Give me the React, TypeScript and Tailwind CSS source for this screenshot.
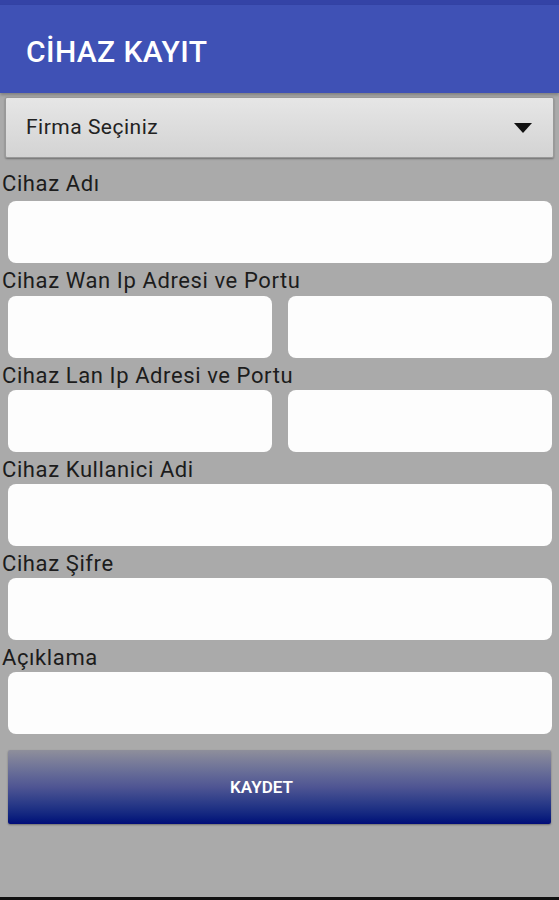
import React from "react";

const font = { fontFamily: "Roboto, 'Noto Sans', Arial, sans-serif" };

function Field({ className = "" }: { className?: string }) {
  return <div className={`h-[62px] rounded-[8px] bg-[#fdfdfd] ${className}`} />;
}

function Label({ children, pad }: { children: React.ReactNode; pad: string }) {
  return (
    <div className={`pl-[2px] text-[22px] leading-[24px] tracking-[0.6px] text-[#1c1c1c] ${pad}`}>
      {children}
    </div>
  );
}

export default function App() {
  return (
    <div className="w-[559px] h-[900px] bg-[#aaaaaa] flex flex-col overflow-hidden" style={font}>
      {/* status bar + toolbar */}
      <div className="h-[5px] bg-[#3443a6]" />
      <div className="h-[88px] bg-[#3f51b5] flex items-center pl-[26px] pt-[5px] shadow-[0_2px_3px_rgba(0,0,0,0.25)]">
        <h1 className="text-[30px] font-medium text-white tracking-[0.4px]">CİHAZ KAYIT</h1>
      </div>

      {/* spinner */}
      <div className="mt-[4px] mx-[5px] h-[61px] rounded-[2px] border border-[#999] bg-gradient-to-b from-[#e6e6e6] to-[#d3d3d3] shadow-[0_1px_2px_rgba(0,0,0,0.35)] flex items-center justify-between pl-[20px] pr-[21px]">
        <span className="text-[21px] tracking-[0.5px] text-[#222]">Firma Seçiniz</span>
        <svg width="18" height="10" viewBox="0 0 18 10"><polygon points="0,0 18,0 9,10" fill="#111" /></svg>
      </div>

      <Label pad="pt-[14px] pb-[5px]">Cihaz Adı</Label>
      <Field className="ml-[8px] mr-[7px]" />

      <Label pad="pt-[6px] pb-[3px]">Cihaz Wan Ip Adresi ve Portu</Label>
      <div className="flex gap-[16px] ml-[8px] mr-[7px]">
        <Field className="flex-1" />
        <Field className="flex-1" />
      </div>

      <Label pad="pt-[6px] pb-[2px]">Cihaz Lan Ip Adresi ve Portu</Label>
      <div className="flex gap-[16px] ml-[8px] mr-[7px]">
        <Field className="flex-1" />
        <Field className="flex-1" />
      </div>

      <Label pad="pt-[6px] pb-[2px]">Cihaz Kullanici Adi</Label>
      <Field className="ml-[8px] mr-[7px]" />

      <Label pad="pt-[6px] pb-[2px]">Cihaz Şifre</Label>
      <Field className="ml-[8px] mr-[7px]" />

      <Label pad="pt-[6px] pb-[2px]">Açıklama</Label>
      <Field className="ml-[8px] mr-[7px]" />

      <button className="mt-[16px] ml-[8px] mr-[8px] h-[74px] pr-[36px] pt-[2px] rounded-[2px] bg-gradient-to-b from-[#8f8f9b] via-[#4f5593] to-[#020b78] shadow-[0_1px_2px_rgba(0,0,0,0.35)] text-white text-[17px] font-semibold">
        KAYDET
      </button>

      <div className="flex-1" />
      <div className="h-[3px] bg-[#111]" />
    </div>
  );
}
